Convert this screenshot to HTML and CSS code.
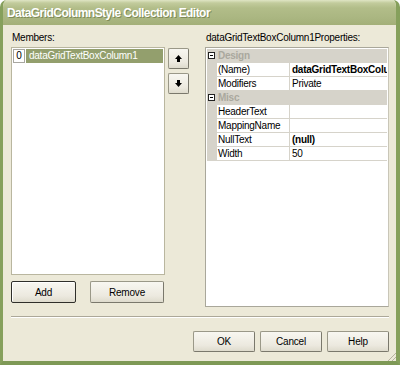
FILE: index.html
```html
<!DOCTYPE html>
<html lang="en">
<head>
	<meta charset="UTF-8">
	<title>DataGridColumnStyle Collection Editor</title>
	<link rel="stylesheet" href="styles.css">
</head>
<body>
	<div class="window">
		<div class="titlebar">DataGridColumnStyle Collection Editor</div>
		<div class="client">
			<div class="panes">
				<div class="left">
					<div class="label">Members:</div>
					<div class="listbox">
						<div class="item">
							<span class="index">0</span>
							<span class="item_name">dataGridTextBoxColumn1</span>
						</div>
					</div>
					<div class="left_btns">
						<button class="btn btn_default btn_add">Add</button>
						<button class="btn btn_remove">Remove</button>
					</div>
				</div>
				<div class="arrows">
					<button class="btn arrow_btn">
						<svg width="9" height="9" viewBox="0 0 9 9"><path d="M4.5 1 L8 5 H6 V8 H3 V5 H1 Z" fill="#000"/></svg>
					</button>
					<button class="btn arrow_btn">
						<svg width="9" height="9" viewBox="0 0 9 9"><path d="M4.5 8 L8 4 H6 V1 H3 V4 H1 Z" fill="#000"/></svg>
					</button>
				</div>
				<div class="right">
					<div class="label">dataGridTextBoxColumn1Properties:</div>
					<div class="propgrid">
						<div class="cat">
							<span class="gutter"><span class="minus"></span></span>
							<span class="cat_name">Design</span>
						</div>
						<div class="prop">
							<span class="gutter"></span>
							<span class="pname">(Name)</span>
							<span class="pval bold">dataGridTextBoxColumn1</span>
						</div>
						<div class="prop">
							<span class="gutter"></span>
							<span class="pname">Modifiers</span>
							<span class="pval">Private</span>
						</div>
						<div class="cat">
							<span class="gutter"><span class="minus"></span></span>
							<span class="cat_name">Misc</span>
						</div>
						<div class="prop">
							<span class="gutter"></span>
							<span class="pname">HeaderText</span>
							<span class="pval"></span>
						</div>
						<div class="prop">
							<span class="gutter"></span>
							<span class="pname">MappingName</span>
							<span class="pval"></span>
						</div>
						<div class="prop">
							<span class="gutter"></span>
							<span class="pname">NullText</span>
							<span class="pval bold">(null)</span>
						</div>
						<div class="prop">
							<span class="gutter"></span>
							<span class="pname">Width</span>
							<span class="pval">50</span>
						</div>
					</div>
				</div>
			</div>
			<div class="sep"></div>
			<div class="footer">
				<button class="btn foot_btn">OK</button>
				<button class="btn foot_btn">Cancel</button>
				<button class="btn foot_btn">Help</button>
			</div>
			<div class="grip"></div>
		</div>
	</div>
</body>
</html>
```

FILE: styles.css
```css
html, body {
	margin: 0;
	height: 100%;
}
body {
	background: #fff;
	font-family: "Liberation Sans", Arial, sans-serif;
	font-size: 10px;
	letter-spacing: -0.25px;
	color: #000;
}
.window {
	width: 400px;
	height: 365px;
	box-sizing: border-box;
	background: #ece9d8;
	border-left: 3px solid #86a05c;
	border-right: 4px solid #86a05c;
	border-bottom: 4px solid #7e9956;
	border-radius: 7px 7px 0 0;
	display: flex;
	flex-direction: column;
	overflow: hidden;
}
.titlebar {
	height: 25px;
	margin: 0 -4px 0 -3px;
	padding-left: 7px;
	box-sizing: border-box;
	background: linear-gradient(#dfe5c4 0, #c2cb9c 3px, #b2bd89 8px, #aab681 18px, #a3af78 25px);
	border-radius: 7px 7px 0 0;
	color: #fff;
	font-weight: bold;
	font-size: 12px;
	line-height: 26px;
	text-shadow: 1px 1px 0 #7d8a57;
	letter-spacing: -0.55px;
}
.client {
	flex: 1;
	padding: 6px 7px 0 8px;
	display: flex;
	flex-direction: column;
	position: relative;
}
.panes {
	display: flex;
}
.label {
	height: 16px;
	line-height: 13px;
	padding-left: 1px;
}
.left {
	width: 154px;
}
.listbox {
	height: 228px;
	box-sizing: border-box;
	background: #fff;
	border: 1px solid #b9b69f;
	padding: 1px;
}
.item {
	display: flex;
	height: 14px;
}
.index {
	width: 12px;
	box-sizing: border-box;
	border: 1px solid #a8a7a0;
	text-align: center;
	line-height: 12px;
	font-size: 10px;
}
.item_name {
	flex: 1;
	margin-left: 1px;
	background: #939f6d;
	color: #fff;
	padding-left: 3px;
	line-height: 14px;
}
.left_btns {
	display: flex;
	margin-top: 6px;
	gap: 14px;
}
.btn {
	height: 22px;
	padding: 0;
	box-sizing: border-box;
	background: linear-gradient(#f8f7f1, #ece9df 70%, #dedbcd);
	border: 1px solid #9a9888;
	border-radius: 2px;
	border-right-color: #7a786c;
	border-bottom-color: #7a786c;
	font-family: "Liberation Sans", Arial, sans-serif;
	font-size: 10px;
	letter-spacing: -0.2px;
	color: #000;
}
.btn_default {
	border: 1px solid #2f2f2a;
	box-shadow: inset 1px 1px 0 #fff;
}
.btn_add {
	width: 65px;
}
.btn_remove {
	width: 74px;
}
.arrows {
	margin: 17px 0 0 3px;
	width: 21px;
	display: flex;
	flex-direction: column;
	gap: 4px;
}
.arrow_btn {
	width: 21px;
	height: 21px;
	display: flex;
	align-items: center;
	justify-content: center;
}
.right {
	margin-left: 16px;
	width: 184px;
}
.propgrid {
	height: 260px;
	box-sizing: border-box;
	background: #fff;
	border: 1px solid #a9a79a;
	border-right-color: #c9c6b8;
	padding: 1px 1px 0 1px;
}
.cat, .prop {
	display: flex;
	height: 14px;
	line-height: 13px;
}
.gutter {
	width: 10px;
	background: #d6d3ca;
	flex: none;
	position: relative;
}
.cat {
	background: #d6d3ca;
}
.cat_name {
	color: #aaa89e;
	font-weight: bold;
	padding-left: 1px;
}
.minus {
	position: absolute;
	left: 1px;
	top: 3px;
	width: 7px;
	height: 7px;
	border: 1px solid #222;
	background: #fff;
	box-sizing: border-box;
}
.minus:after {
	content: '';
	position: absolute;
	left: 1px;
	top: 2px;
	width: 3px;
	height: 1px;
	background: #000;
}
.prop .pname, .prop .pval {
	border-bottom: 1px solid #d6d3ca;
	box-sizing: border-box;
	white-space: nowrap;
	overflow: hidden;
}
.pname {
	width: 73px;
	padding-left: 1px;
	border-right: 1px solid #d6d3ca;
	flex: none;
}
.pval {
	flex: 1;
	padding-left: 2px;
}
.bold {
	font-weight: bold;
}
.sep {
	margin-top: 9px;
	height: 0;
	border-top: 1px solid #aca899;
	border-bottom: 1px solid #fff;
}
.footer {
	display: flex;
	justify-content: flex-end;
	gap: 5px;
	margin-top: 13px;
}
.foot_btn {
	width: 62px;
	height: 21px;
}
.grip {
	position: absolute;
	right: -2px;
	bottom: 0;
	width: 10px;
	height: 10px;
	background: linear-gradient(135deg, transparent 45%, #b5b29e 45%, #b5b29e 52%, transparent 52%, transparent 65%, #b5b29e 65%, #b5b29e 72%, transparent 72%, transparent 85%, #b5b29e 85%);
}
```
